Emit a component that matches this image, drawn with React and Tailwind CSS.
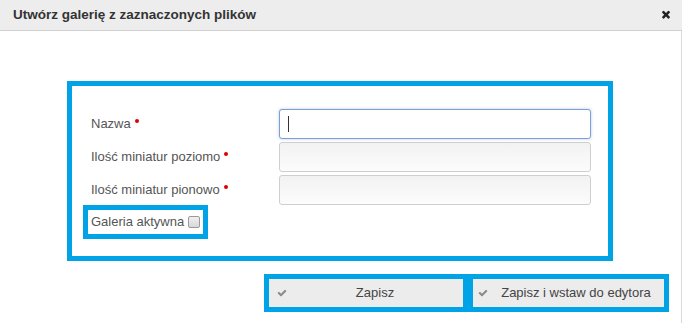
const CHECK = "M1671 566q0 40-28 68l-724 724-136 136q-28 28-68 28t-68-28l-136-136-362-362q-28-28-28-68t28-68l136-136q28-28 68-28t68 28l294 295 656-657q28-28 68-28t68 28l136 136q28 28 28 68z";
const TIMES = "M1298 1214q0 40-28 68l-136 136q-28 28-68 28t-68-28l-294-294-294 294q-28 28-68 28t-68-28l-136-136q-28-28-28-68t28-68l294-294-294-294q-28-28-28-68t28-68l136-136q28-28 68-28t68 28l294 294 294-294q28-28 68-28t68 28l136 136q28 28 28 68t-28 68l-294 294 294 294q28 28 28 68z";

function Label({ children }) {
  return (
    <div className="flex items-center pl-2 text-[13px] text-[#555]">
      <span>{children}</span>
      <span className="mb-[7px] ml-[4px] h-[4px] w-[4px] rounded-full bg-[#e00000]" />
    </div>
  );
}

function Field({ focused }) {
  if (focused) {
    return (
      <div className="flex h-[30px] w-[312px] items-center rounded-[3px] border border-[#7d9fd4] bg-white pl-[8px] shadow-[0_0_3px_rgba(102,150,220,0.5)]">
        <span className="h-[16px] w-px bg-[#333]" />
      </div>
    );
  }
  return <div className="h-[30px] w-[312px] rounded-[3px] border border-[#cfcfcf] bg-gradient-to-b from-[#f2f2f2] to-[#fcfcfc]" />;
}

function SaveButton({ label, width, pad }) {
  return (
    <div className={`h-[38px] border-[5px] border-[#00a3e6] ${width}`}>
      <button type="button" className={`flex h-full w-full items-center bg-[#ececec] text-[13px] text-[#444] ${pad}`}>
        <svg viewBox="0 0 1792 1792" className="h-[10px] w-[10px] fill-[#8a8a8a]">
          <path d={CHECK} />
        </svg>
        <span className="flex-1 text-center">{label}</span>
      </button>
    </div>
  );
}

export default function App() {
  return (
    <div className="h-[323px] w-[682px] overflow-hidden bg-white font-['Liberation_Sans',Arial,sans-serif]">
      <div className="flex h-[31px] items-center justify-between border-b border-[#d0d0d0] bg-[#ededed] pl-[13px] pr-[11px]">
        <h1 className="text-[13.5px] font-bold text-[#333]">Utwórz galerię z zaznaczonych plików</h1>
        <svg viewBox="0 0 1408 1792" className="h-[12px] w-[10px] fill-[#222]">
          <path d={TIMES} />
        </svg>
      </div>
      <div className="h-[292px] border-r border-[#d9d9d9] pt-[50px]">
        <div className="ml-[67px] h-[180px] w-[546px] border-[5px] border-[#00a3e6] pl-[11px] pt-[23px]">
          <div className="grid grid-cols-[196px_312px] gap-y-[3px]">
            <Label>Nazwa</Label>
            <Field focused />
            <Label>Ilość miniatur poziomo</Label>
            <Field />
            <Label>Ilość miniatur pionowo</Label>
            <Field />
          </div>
          <div className="flex h-[34px] w-[125px] items-center border-[5px] border-[#00a3e6] pl-[3px] text-[13px] text-[#555]">
            <span>Galeria aktywna</span>
            <span className="ml-[4px] mb-[1px] h-[12px] w-[12px] rounded-[2px] border border-[#9a9a9a] bg-gradient-to-b from-[#f0f0f0] to-[#d8d8d8]" />
          </div>
        </div>
        <div className="mt-[13px] flex justify-end pr-[12px]">
          <SaveButton label="Zapisz" width="w-[204px]" pad="pl-[8px]" />
          <SaveButton label="Zapisz i wstaw do edytora" width="w-[201px]" pad="pl-[5px]" />
        </div>
      </div>
    </div>
  );
}
